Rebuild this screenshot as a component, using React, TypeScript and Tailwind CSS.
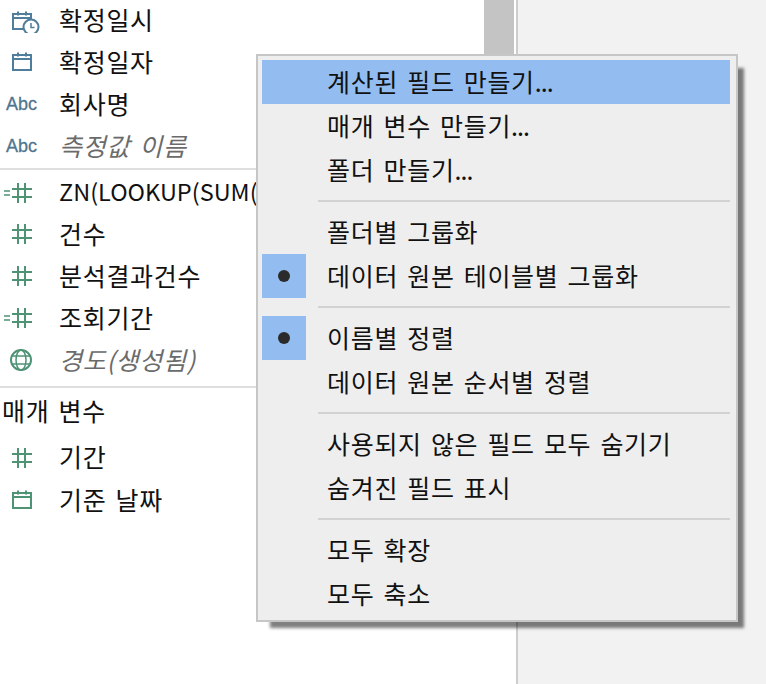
const sansKr = 'font-["Noto_Sans_CJK_KR",sans-serif]';

type IconKind = 'datetime' | 'date' | 'abc' | 'hash' | 'calcHash' | 'globe';

const BLUE = '#4f7d9c';
const GREEN = '#4f9375';

function FieldIcon({ kind, green }: { kind: IconKind; green?: boolean }) {
  if (kind === 'abc') {
    return (
      <span className="w-[59px] shrink-0 pl-[6px] font-['Liberation_Sans',sans-serif] text-[18px] leading-none tracking-normal text-[#4f7590] [-webkit-text-stroke:0.3px_#4f7590]">
        Abc
      </span>
    );
  }
  const color = green ? GREEN : BLUE;
  return (
    <span className="w-[59px] shrink-0">
      <svg width="44" height="24" viewBox="0 0 44 24" fill="none" stroke={color} strokeWidth="2">
        {(kind === 'date' || kind === 'datetime') && (
          <>
            <rect x="13" y="5" width="18" height="15" />
            <path d="M13 9h18M18 2.500v4M26 2.500v4" />
          </>
        )}
        {kind === 'datetime' && (
          <>
            <circle cx="31" cy="18" r="7.500" fill="white" />
            <path d="M31 14v4.500h3.500" strokeWidth="1.500" />
          </>
        )}
        {(kind === 'hash' || kind === 'calcHash') && (
          <path d="M18 2v20M25 2v20M12 8h20M12 16h20" />
        )}
        {kind === 'calcHash' && <path d="M4 10h6M4 14h6" strokeWidth="1.500" />}
        {kind === 'globe' && (
          <>
            <circle cx="21" cy="12" r="10" />
            <ellipse cx="21" cy="12" rx="5" ry="10" strokeWidth="1.500" />
            <path d="M11.500 8h19M11.500 16h19" strokeWidth="1.500" />
          </>
        )}
      </svg>
    </span>
  );
}

function FieldRow({
  kind,
  label,
  green,
  italic,
  latin,
  height = 'h-[42px]',
}: {
  kind: IconKind;
  label: string;
  green?: boolean;
  italic?: boolean;
  latin?: boolean;
  height?: string;
}) {
  return (
    <div className={`flex items-center whitespace-nowrap ${height}`}>
      <FieldIcon kind={kind} green={green} />
      <span
        className={`pb-[2px] ${italic ? 'italic text-[#6b6b6b]' : 'text-[#111111]'} ${
          latin ? 'text-[23.500px] tracking-normal' : ''
        }`}
      >
        {label}
      </span>
    </div>
  );
}

function MenuItem({
  label,
  active,
  checked,
}: {
  label: string;
  active?: boolean;
  checked?: boolean;
}) {
  return (
    <div className={`flex h-[44px] items-center whitespace-nowrap ${active ? 'bg-[#93bdf0]' : ''}`}>
      <span className="flex h-[44px] w-[44px] shrink-0 items-center justify-center">
        {checked && (
          <span className="flex h-[44px] w-[44px] items-center justify-center bg-[#93bdf0]">
            <span className="h-[12px] w-[12px] rounded-full bg-[#2b2b2b]" />
          </span>
        )}
      </span>
      <span className="ml-[21px] pb-[2px]">
        {label.replace('...', '')}
        {label.endsWith('...') && <span className="tracking-[-1px]">...</span>}
      </span>
    </div>
  );
}

function MenuSeparator() {
  return <div className="my-2 ml-[56px] h-[2px] bg-[#d2d2d2]" />;
}

export default function App() {
  return (
    <div
      className={`relative flex h-[684px] w-[766px] overflow-hidden bg-white text-[25px] leading-none tracking-[0.7px] text-[#111111] [word-spacing:2.800px] ${sansKr}`}
    >
      <div className="w-[484px] shrink-0">
        <FieldRow kind="datetime" label="확정일시" height="h-[41px]" />
        <FieldRow kind="date" label="확정일자" />
        <FieldRow kind="abc" label="회사명" />
        <FieldRow kind="abc" label="측정값 이름" italic />
        <div className="mb-[3px] mt-[1px] h-[2px] bg-[#dedede]" />
        <FieldRow kind="calcHash" label="ZN(LOOKUP(SUM(" green latin height="h-[40px]" />
        <FieldRow kind="hash" label="건수" green />
        <FieldRow kind="hash" label="분석결과건수" green />
        <FieldRow kind="calcHash" label="조회기간" green />
        <FieldRow kind="globe" label="경도(생성됨)" green italic />
        <div className="mt-[5px] h-[2px] bg-[#dedede]" />
        <div className="mb-[2px] flex h-[46px] items-center pb-[2px] pl-[2px]">매개 변수</div>
        <FieldRow kind="hash" label="기간" green height="h-[43px]" />
        <FieldRow kind="date" label="기준 날짜" green />
      </div>

      <div className="h-full w-[34px] shrink-0 border-r-2 border-[#cdcdcd]">
        <div className="h-[60px] w-[30px] bg-[#c4c4c4]" />
      </div>
      <div className="h-full flex-1 bg-[#f2f2f2]" />

      {/* context menu floats over the field list */}
      <div className="absolute left-[256px] top-[54px] h-[568px] w-[482px] border-2 border-[#c6c6c6] bg-[#eeeeee] pb-1 pl-1 pr-[6px] pt-1 shadow-[10px_10px_3px_-4px_rgba(0,0,0,0.5)]">
        <MenuItem label="계산된 필드 만들기..." active />
        <MenuItem label="매개 변수 만들기..." />
        <MenuItem label="폴더 만들기..." />
        <MenuSeparator />
        <MenuItem label="폴더별 그룹화" />
        <MenuItem label="데이터 원본 테이블별 그룹화" checked />
        <MenuSeparator />
        <MenuItem label="이름별 정렬" checked />
        <MenuItem label="데이터 원본 순서별 정렬" />
        <MenuSeparator />
        <MenuItem label="사용되지 않은 필드 모두 숨기기" />
        <MenuItem label="숨겨진 필드 표시" />
        <MenuSeparator />
        <MenuItem label="모두 확장" />
        <MenuItem label="모두 축소" />
      </div>
    </div>
  );
}
